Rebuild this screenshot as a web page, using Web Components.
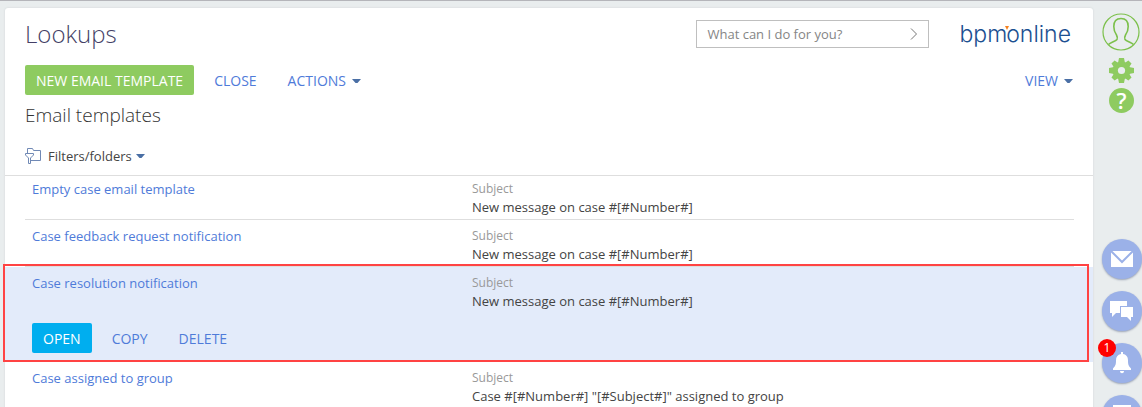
<!DOCTYPE html>
<html lang="en">
<head>
<meta charset="utf-8">
<meta name="viewport" content="width=device-width, initial-scale=1">
<title>Lookups</title>
<style>
  html, body { height: 100%; }
  body {
    margin: 0;
    overflow: hidden;
    font: 13px/18px "Open Sans", "Noto Sans", sans-serif;
    color: #444;
    background: #e9edee;
    --link: #4f7bd9;
    --line: #dedede;
    --accent: #8ecb60;
  }
</style>
</head>
<body>
<app-shell>
  <app-header slot="main" heading="Lookups" section="Email templates"></app-header>
  <lookup-list slot="main">
    <lookup-row name="Empty case email template" subject="New message on case #[#Number#]" first></lookup-row>
    <lookup-row name="Case feedback request notification" subject="New message on case #[#Number#]"></lookup-row>
    <lookup-row name="Case resolution notification" subject="New message on case #[#Number#]" selected>
      <action-button slot="actions" kind="blue">OPEN</action-button>
      <action-button slot="actions">COPY</action-button>
      <action-button slot="actions">DELETE</action-button>
    </lookup-row>
    <lookup-row name="Case assigned to group" subject='Case #[#Number#] "[#Subject#]" assigned to group'></lookup-row>
  </lookup-list>
  <side-rail slot="rail"></side-rail>
</app-shell>

<script>
  const define = (name, html, setup) => {
    const template = document.createElement('template');
    template.innerHTML = html;
    customElements.define(name, class extends HTMLElement {
      constructor() {
        super();
        this.attachShadow({ mode: 'open' }).append(template.content.cloneNode(true));
      }
      connectedCallback() { if (setup) setup(this, this.shadowRoot); }
    });
  };

  define('app-shell', `
    <style>
      :host { display: grid; grid-template-columns: minmax(0, 1fr) 49px; box-sizing: border-box;
              min-height: 100vh; padding: 7px 0 0 5px; border-top: 1px solid #b5b5ba; }
      main { background: #fff; border-radius: 3px 3px 0 0; box-shadow: 0 0 2px #ccd1d3; }
    </style>
    <main><slot name="main"></slot></main>
    <slot name="rail"></slot>`);

  define('action-button', `
    <style>
      :host { display: block; }
      button { display: flex; align-items: center; gap: 6px; box-sizing: border-box; height: 30px; margin: 0;
               padding: 2px 11px 0; border: 0; border-radius: 2px; background: none;
               color: var(--link); font: inherit; font-size: 14px; cursor: pointer; white-space: nowrap; }
      :host([kind="green"]) button { background: var(--accent); color: #fff; }
      :host([kind="blue"]) button { background: #00aeef; color: #fff; }
      :host([kind="plain"]) button { color: #444; font-size: 13px; padding: 0; height: 20px; gap: 4px; }
      :host([flush]) button { padding-right: 0; }
      svg { display: none; fill: #4a6fa5; }
      :host([menu]) svg { display: block; }
    </style>
    <button type="button"><slot></slot><svg width="9" height="5" aria-hidden="true"><path d="M0 0h9L5.500 4h-2z"/></svg></button>`);

  define('search-box', `
    <style>
      :host { display: block; }
      form { display: flex; box-sizing: border-box; width: 233px; height: 28px; border: 1px solid #bfbfbf; background: #fff; }
      input { flex: 1; min-width: 0; padding: 0 0 0 10px; border: 0; outline: 0; background: none; font: inherit; color: #444; }
      input::placeholder { color: #858585; opacity: 1; }
      button { width: 29px; padding: 0; border: 0; background: none; display: grid; place-items: center; }
      svg { fill: none; stroke: #777; }
    </style>
    <form onsubmit="return false">
      <input type="text" aria-label="Command line" placeholder="What can I do for you?">
      <button type="submit" aria-label="Run"><svg width="8" height="12"><path d="M1 .5 6.500 6 1 11.500"/></svg></button>
    </form>`);

  define('brand-logo', `
    <style>
      :host { display: block; }
      a { display: flex; align-items: flex-start; color: #1c5091; text-decoration: none;
          font: 300 23px/26px Inter, "Liberation Sans", sans-serif; }
      svg { margin: 5px -3px 0 -2px; fill: #f58220; }
    </style>
    <a href="#home" aria-label="bpmonline"><span>bpm</span><svg width="4" height="4"><path d="M0 0h4L2 4z"/></svg><span>online</span></a>`);

  define('app-header', `
    <style>
      :host { display: block; border-bottom: 1px solid var(--line); padding: 12px 20px 9px; }
      .bar { display: flex; align-items: center; }
      .spread { flex: 1; }
      .top { height: 28px; }
      h1, h2 { margin: 0; font-weight: 300; }
      h1 { flex: 1; font-size: 24px; line-height: 28px; color: #443f66; }
      brand-logo { margin: 0 2px 0 30px; }
      .tools { margin-top: 17px; gap: 9px; }
      .tools .spread { text-align: right; }
      h2 { margin: 7px 0 0; font-size: 19px; line-height: 26px; color: #333; }
      .filters { gap: 7px; margin-top: 18px; }
      .filters svg { fill: #fff; stroke: #7089b5; }
    </style>
    <div class="bar top"><h1></h1><search-box></search-box><brand-logo></brand-logo></div>
    <div class="bar tools">
      <action-button kind="green">NEW EMAIL TEMPLATE</action-button>
      <action-button>CLOSE</action-button>
      <action-button menu>ACTIONS</action-button>
      <span class="spread"></span>
      <action-button menu flush>VIEW</action-button>
    </div>
    <h2></h2>
    <div class="bar filters">
      <svg width="16" height="16" aria-hidden="true"><path d="M2.500 5V.5h5l1 2h7v10H6"/><path d="M.5 5.500h8v1.500l-3 3v5.500h-2V10l-3-3z"/></svg>
      <action-button kind="plain" menu>Filters/folders</action-button>
    </div>`, (el, root) => {
      root.querySelector('h1').textContent = el.getAttribute('heading');
      root.querySelector('h2').textContent = el.getAttribute('section');
    });

  define('lookup-list', `
    <style>:host { display: block; }</style>
    <div role="list"><slot></slot></div>`);

  define('lookup-row', `
    <style>
      :host { display: block; position: relative; padding: 0 19px 0 20px; }
      .row { display: grid; grid-template-columns: 440px 1fr; padding: 7px 7px 2px; border-bottom: 1px solid var(--line); }
      :host([first]) .row { padding-top: 4px; }
      a { color: var(--link); text-decoration: none; }
      dl, dt, dd { margin: 0; }
      dt { font-size: 12px; color: #999; }
      dd { line-height: 19px; }
      .actions { display: none; gap: 9px; grid-column: 1 / -1; margin-top: 12px; }
      .frame { display: none; }
      :host([selected]) { background: #e3ebfa; }
      :host([selected]) .row { padding-bottom: 8px; }
      :host([selected]) .actions { display: flex; }
      :host([selected]) .frame { display: block; position: absolute; inset: -3px 4px 0 -2px; border: 2px solid #ff4343; pointer-events: none; }
    </style>
    <div class="row" role="listitem">
      <a href="#record"></a>
      <dl><dt>Subject</dt><dd></dd></dl>
      <div class="actions"><slot name="actions"></slot></div>
    </div>
    <div class="frame"></div>`, (el, root) => {
      root.querySelector('a').textContent = el.getAttribute('name');
      root.querySelector('dd').textContent = el.getAttribute('subject');
    });

  define('round-button', `
    <style>
      :host { display: block; position: relative; }
      button { display: grid; place-items: center; width: 40px; height: 40px; padding: 0; border: 0; border-radius: 50%;
               background: #9bb1e8; box-shadow: 0 1px 2px #9aa3b5; }
      .badge { position: absolute; left: -4px; top: -4px; width: 18px; height: 18px; border-radius: 50%;
               background: #f00; color: #fff; font-size: 12px; line-height: 18px; text-align: center; }
      .badge[hidden] { display: none; }
    </style>
    <button type="button"><slot></slot></button><span class="badge" hidden></span>`, (el, root) => {
      root.querySelector('button').setAttribute('aria-label', el.getAttribute('label'));
      if (el.hasAttribute('count')) {
        const badge = root.querySelector('.badge');
        badge.hidden = false;
        badge.textContent = el.getAttribute('count');
      }
    });

  define('side-rail', `
    <style>
      :host { display: flex; flex-direction: column; align-items: center; padding: 5px 0 0 8px; }
      button { display: grid; place-items: center; padding: 0; border: 0; background: none; }
      .user svg { fill: none; stroke: #7cc04b; }
      .gear { margin-top: 7px; }
      .gear svg { fill: var(--accent); }
      .help { width: 25px; height: 25px; margin-top: 5px; border-radius: 50%; background: var(--accent); color: #fff;
              font: 600 22px/25px "Open Sans", sans-serif; }
      .feeds { display: flex; flex-direction: column; gap: 12px; margin: 126px 0 0 1px; }
      round-button svg { fill: #fff; }
    </style>
    <button class="user" type="button" aria-label="Profile"><svg width="39" height="38" viewBox="0 0 39 38">
      <circle cx="19" cy="19" r="18" stroke-width="1.200"/>
      <path stroke-width="1.600" d="M6.500 31.500c2-2 7-3 8.500-5 .6-1.200.3-3-.5-4.500-1.500-2-2.700-5-2.700-8.500 0-5 2.700-8 7.200-8s7.200 3 7.200 8c0 3.500-1.200 6.500-2.700 8.500-.8 1.500-1.100 3.300-.5 4.500 1.500 2 6.500 3 8.500 5"/></svg></button>
    <button class="gear" type="button" aria-label="Settings"><svg width="25" height="25" viewBox="-12.500 -12.500 25 25">
      <defs><mask id="hub"><rect x="-13" y="-13" width="26" height="26" fill="#fff"/><circle r="3.600" fill="#000"/></mask></defs>
      <g mask="url(#hub)"><circle r="9"/>
      <path d="M-2.500-12.500h5l1 5h-7zM-2.500 12.500h5l1-5h-7zM-12.500-2.500v5l5 1v-7zM12.500-2.500v5l-5 1v-7z"/>
      <path transform="rotate(45)" d="M-2.200-12h4.400l1 5h-6.400zM-2.200 12h4.400l1-5h-6.400zM-12-2.200v4.400l5 1v-6.400zM12-2.200v4.400l-5 1v-6.400z"/></g></svg></button>
    <button class="help" type="button" aria-label="Help">?</button>
    <div class="feeds">
      <round-button label="Email"><svg width="22" height="16"><path d="M0 0h22v16H0z"/><path d="M0 0l11 11L22 0" fill="none" stroke="#9bb1e8" stroke-width="2"/></svg></round-button>
      <round-button label="Feed"><svg width="24" height="20"><path d="M0 0h17v5h-7v7H6l-4 4v-4H0z"/><path d="M11 6h12v10h-2v4l-4-4h-6z"/></svg></round-button>
      <round-button label="Notifications" count="1"><svg width="18" height="22"><path d="M8 0h2v2c3.500.6 5 3 5 6.500 0 4 .6 5.500 3 8V18H0v-1.500c2.400-2.500 3-4 3-8C3 5 4.500 2.600 8 2zM7 19h4c0 3-4 3-4 0z"/></svg></round-button>
      <round-button label="Tasks"><svg width="18" height="20"><path d="M0 0h18v16h-6l-3 4-3-4H0z"/></svg></round-button>
    </div>`);
</script>
</body>
</html>
